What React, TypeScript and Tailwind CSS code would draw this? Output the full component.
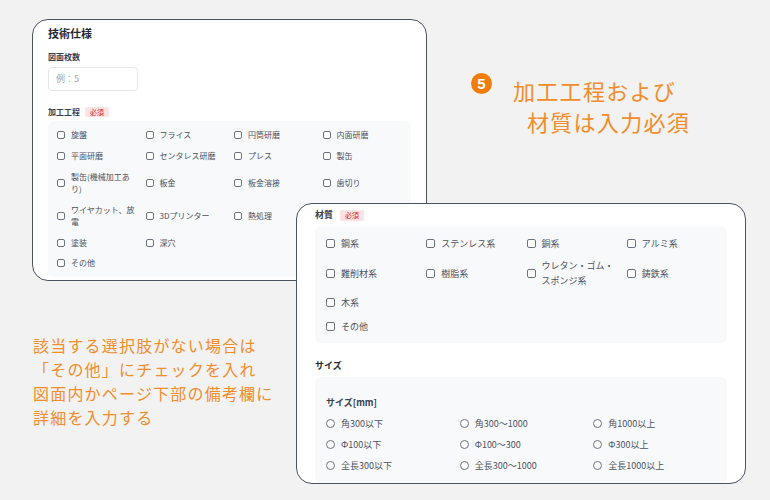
import React from "react";

const FONT = { fontFamily: '"Noto Sans CJK JP", "Noto Sans", sans-serif' };

// 加工工程 (row 4, col 4 sits under the other card, left empty)
const processRows: string[][] = [
  ["旋盤"], ["フライス"], ["円筒研磨"], ["内面研磨"],
  ["平面研磨"], ["センタレス研磨"], ["プレス"], ["製缶"],
  ["製缶(機械加工あ", "り)"], ["板金"], ["板金溶接"], ["歯切り"],
  ["ワイヤカット、放", "電"], ["3Dプリンター"], ["熱処理"], [],
  ["塗装"], ["深穴"],
];

const materials: string[][] = [
  ["鋼系"], ["ステンレス系"], ["銅系"], ["アルミ系"],
  ["難削材系"], ["樹脂系"], ["ウレタン・ゴム・", "スポンジ系"], ["鋳鉄系"],
  ["木系"],
];

const sizes = [
  "角300以下", "角300〜1000", "角1000以上",
  "Φ100以下", "Φ100〜300", "Φ300以上",
  "全長300以下", "全長300〜1000", "全長1000以上",
];

function SmallCheck({ lines }: { lines: string[] }) {
  if (lines.length === 0) return <div />;
  return (
    <div className="flex items-center gap-[6px]">
      <span className="shrink-0 w-[8px] h-[8px] rounded-[2px] border border-[#6b7280] bg-white" />
      <span className="text-[8px] leading-[12px] text-[#4b5260] whitespace-nowrap">
        {lines.map((l, i) => (
          <span key={i} className="block">{l}</span>
        ))}
      </span>
    </div>
  );
}

function Check({ lines }: { lines: string[] }) {
  return (
    <div className="flex items-center gap-[6px]">
      <span className="shrink-0 w-[9px] h-[9px] rounded-[2px] border border-[#6b7280] bg-white" />
      <span className="text-[9px] leading-[15px] text-[#4b5260] whitespace-nowrap">
        {lines.map((l, i) => (
          <span key={i} className="block">{l}</span>
        ))}
      </span>
    </div>
  );
}

function Radio({ label }: { label: string }) {
  return (
    <div className="flex items-center gap-[6px]">
      <span className="shrink-0 w-[9px] h-[9px] rounded-full border border-[#6b7280] bg-white" />
      <span className="text-[9px] leading-[15px] text-[#4b5260] whitespace-nowrap">{label}</span>
    </div>
  );
}

export default function App() {
  return (
    <div className="relative w-[770px] h-[500px] bg-[#f2f2f2] overflow-hidden" style={FONT}>
      {/* 技術仕様 card */}
      <div className="absolute left-[32px] top-[19px] w-[395px] h-[262px] rounded-[16px] border border-[#4b5262] bg-white overflow-hidden px-[15px] pt-[6px]">
        <p className="text-[11px] leading-[14px] font-bold text-[#1f2937]">技術仕様</p>
        <p className="mt-[11px] text-[8px] leading-[12px] font-semibold text-[#374151]">図面枚数</p>
        <div className="mt-[4px] w-[90px] h-[24px] rounded-[4px] border border-[#e5e7eb] bg-white flex items-center px-[7px] text-[9px] text-[#9ca3af]">
          例：5
        </div>
        <div className="mt-[15px] flex items-center gap-[5px] h-[12px]">
          <span className="text-[8px] leading-[12px] font-semibold text-[#374151]">加工工程</span>
          <span className="h-[10px] px-[5px] rounded-[2px] bg-[#fde2e2] text-[#dc2626] text-[7px] leading-[10px]">必須</span>
        </div>
        <div className="mt-[3px] rounded-[6px] bg-[#f8f9fb] pl-[9px] pt-[8px] pb-[8px]">
          <div className="grid grid-cols-4 gap-y-[9px]">
            {processRows.map((l, i) => (
              <SmallCheck key={i} lines={l} />
            ))}
          </div>
          <div className="mt-[8px]">
            <SmallCheck lines={["その他"]} />
          </div>
        </div>
      </div>

      {/* 材質 / サイズ card */}
      <div className="absolute left-[296px] top-[203px] w-[450px] h-[281px] rounded-[16px] border border-[#4b5262] bg-white overflow-hidden px-[18px] pt-[5px]">
        <div className="flex items-center gap-[7px] h-[12px]">
          <span className="text-[9px] leading-[12px] font-semibold text-[#374151]">材質</span>
          <span className="h-[11px] px-[5px] rounded-[2px] bg-[#fde2e2] text-[#dc2626] text-[7px] leading-[11px]">必須</span>
        </div>
        <div className="mt-[5px] rounded-[6px] bg-[#f8f9fb] pl-[11px] pt-[10px] pb-[9px]">
          <div className="grid grid-cols-4 gap-y-[7px]">
            {materials.map((l, i) => (
              <Check key={i} lines={l} />
            ))}
          </div>
          <div className="mt-[9px]">
            <Check lines={["その他"]} />
          </div>
        </div>
        <p className="mt-[17px] text-[9px] leading-[12px] font-bold text-[#1f2937]">サイズ</p>
        <div className="mt-[5px] rounded-[6px] bg-[#f8f9fb] pl-[11px] pt-[20px] pb-[10px]">
          <p className="text-[9px] leading-[12px] font-semibold text-[#374151]">サイズ[mm]</p>
          <div className="mt-[7px] grid grid-cols-3 gap-y-[6px]">
            {sizes.map((s) => (
              <Radio key={s} label={s} />
            ))}
          </div>
        </div>
      </div>

      {/* annotation 5 */}
      <div className="absolute left-[471px] top-[73px] w-[21px] h-[21px] rounded-full bg-[#f07c0c] text-white text-[15px] font-bold leading-none flex items-center justify-center" style={{ fontFamily: '"Liberation Sans", Arial, sans-serif' }}>
        5
      </div>
      <div className="absolute left-[513px] top-[75px] text-[22px] leading-[31px] tracking-[1.3px] text-[#f18d2b]">
        <p>加工工程および</p>
        <p className="pl-[14px]">材質は入力必須</p>
      </div>

      {/* left note */}
      <div className="absolute left-[33px] top-[333px] text-[16px] leading-[24px] tracking-[1.2px] text-[#f18d2b]">
        <p>該当する選択肢がない場合は</p>
        <p>「その他」にチェックを入れ</p>
        <p>図面内かページ下部の備考欄に</p>
        <p>詳細を入力する</p>
      </div>
    </div>
  );
}
